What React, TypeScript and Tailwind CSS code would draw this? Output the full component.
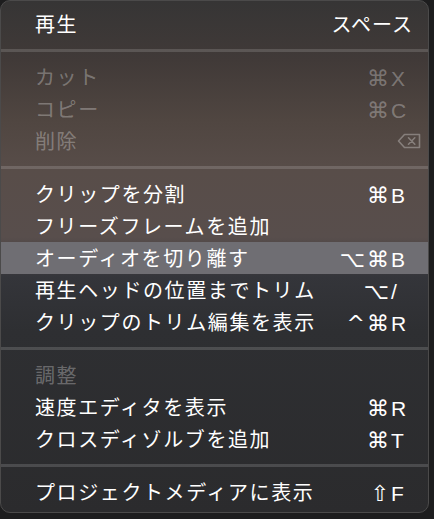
type Row =
  | { kind: 'item'; label: string; mods?: string; keyLabel?: string; disabled?: boolean; active?: boolean; backspace?: boolean }
  | { kind: 'sep' }
  | { kind: 'header'; label: string };

const rows: Row[] = [
  { kind: 'item', label: '再生', keyLabel: 'スペース' },
  { kind: 'sep' },
  { kind: 'item', label: 'カット', mods: '⌘', keyLabel: 'X', disabled: true },
  { kind: 'item', label: 'コピー', mods: '⌘', keyLabel: 'C', disabled: true },
  { kind: 'item', label: '削除', disabled: true, backspace: true },
  { kind: 'sep' },
  { kind: 'item', label: 'クリップを分割', mods: '⌘', keyLabel: 'B' },
  { kind: 'item', label: 'フリーズフレームを追加' },
  { kind: 'item', label: 'オーディオを切り離す', mods: '⌥⌘', keyLabel: 'B', active: true },
  { kind: 'item', label: '再生ヘッドの位置までトリム', mods: '⌥', keyLabel: '/' },
  { kind: 'item', label: 'クリップのトリム編集を表示', mods: '^⌘', keyLabel: 'R' },
  { kind: 'sep' },
  { kind: 'header', label: '調整' },
  { kind: 'item', label: '速度エディタを表示', mods: '⌘', keyLabel: 'R' },
  { kind: 'item', label: 'クロスディゾルブを追加', mods: '⌘', keyLabel: 'T' },
  { kind: 'sep' },
  { kind: 'item', label: 'プロジェクトメディアに表示', mods: '⇧', keyLabel: 'F' },
];

function BackspaceIcon() {
  return (
    <svg width="24" height="16" viewBox="0 0 24 16" fill="none" stroke="currentColor" strokeWidth="1.6" strokeLinejoin="round">
      <path d="M7.5 1.5H22.5V14.5H7.5L1.5 8Z" />
      <path d="M11.5 4.8L17.8 11.2M17.8 4.8L11.5 11.2" strokeLinecap="round" />
    </svg>
  );
}

export default function App() {
  return (
    <div className="w-[434px] h-[519px] bg-[#1d1d1e] overflow-hidden font-['Noto_Sans_CJK_JP',sans-serif]">
      <div className="w-[429px] h-[513px] rounded-[10px] border border-[#4b4a4a] pt-[7px] bg-[linear-gradient(to_bottom,#363535_0px,#413a38_60px,#504641_120px,#584d49_170px,#584e4c_236px,#34353a_276px,#2e2f32_330px,#2b2b2d_513px)]">
        {rows.map((row, i) => {
          if (row.kind === 'sep') {
            return (
              <div key={i} className="h-[21px] flex items-center">
                <div className="w-full h-[3px] bg-white/15" />
              </div>
            );
          }
          if (row.kind === 'header') {
            return (
              <div key={i} className="h-[32px] flex items-center pl-[34px] text-[20px] tracking-[1.6px] text-white/30">
                {row.label}
              </div>
            );
          }
          const tone = row.disabled ? 'text-white/30' : 'text-white';
          return (
            <div
              key={i}
              className={`h-[32px] flex items-center justify-between pl-[34px] pr-[15px] ${tone} ${row.active ? 'bg-[#6f6e73]' : ''}`}
            >
              <span className="text-[20px] tracking-[1.6px] whitespace-nowrap">{row.label}</span>
              {row.backspace ? (
                <span className="-mr-[8px] flex items-center">
                  <BackspaceIcon />
                </span>
              ) : row.keyLabel && row.keyLabel.length > 1 ? (
                <span className="text-[20px] tracking-[1px] whitespace-nowrap">{row.keyLabel}</span>
              ) : row.keyLabel ? (
                <span className="flex items-baseline pt-[2px]">
                  <span className="font-['DejaVu_Sans',sans-serif] text-[22px] tracking-[2px] whitespace-nowrap">{row.mods}</span>
                  <span className="w-[22px] text-left font-['Liberation_Sans',sans-serif] text-[21px] font-medium">{row.keyLabel}</span>
                </span>
              ) : null}
            </div>
          );
        })}
      </div>
    </div>
  );
}
